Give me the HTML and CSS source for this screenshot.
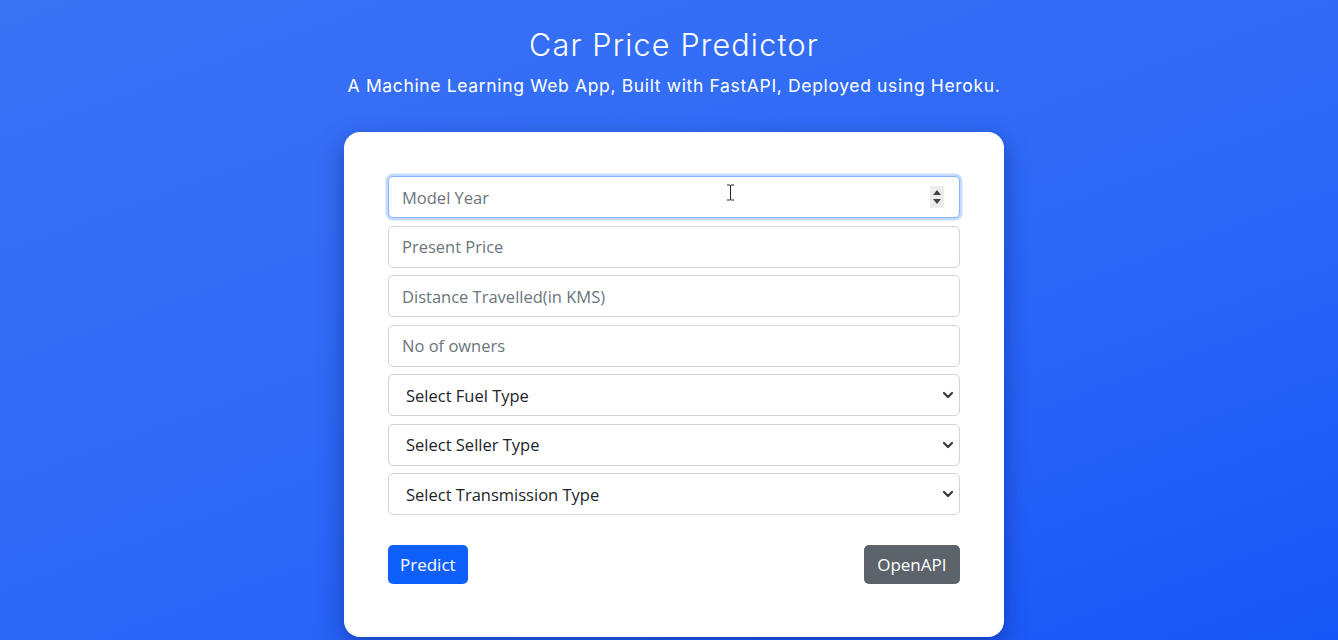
FILE: index.html
```html
<!DOCTYPE html>
<html lang="en">
<head>
<meta charset="utf-8">
<title>Car Price Predictor</title>
<link rel="stylesheet" href="styles.css">
</head>
<body>
<header class="hero">
  <h1 class="title">Car Price Predictor</h1>
  <p class="subtitle">A Machine Learning Web App, Built with FastAPI, Deployed using Heroku.</p>
</header>
<main class="card">
  <form class="form">
    <div class="field">
      <input class="control focused" type="text" placeholder="Model Year">
      <svg class="spinner" width="14" height="22" viewBox="0 0 14 22"><rect x="0" y="0" width="14" height="22" fill="#ececec"/><path d="M3 9 L7 4 L11 9 Z M3 13 L7 18 L11 13 Z" fill="#444"/></svg>
      <svg class="ibeam" width="9" height="17" viewBox="0 0 9 17"><path d="M1 1 H3.5 Q4.5 1 4.5 2 V15 Q4.5 16 3.5 16 H1 M8 1 H5.5 Q4.5 1 4.5 2 M8 16 H5.5 Q4.5 16 4.5 15" fill="none" stroke="#222" stroke-width="1"/></svg>
    </div>
    <input class="control" type="text" placeholder="Present Price">
    <input class="control" type="text" placeholder="Distance Travelled(in KMS)">
    <input class="control" type="text" placeholder="No of owners">
    <div class="field">
      <select class="control select"><option>Select Fuel Type</option></select>
      <svg class="chev" width="12" height="8" viewBox="0 0 12 8"><path d="M2 2 L6 6 L10 2" fill="none" stroke="#343a40" stroke-width="2.2" stroke-linecap="round" stroke-linejoin="round"/></svg>
    </div>
    <div class="field">
      <select class="control select"><option>Select Seller Type</option></select>
      <svg class="chev" width="12" height="8" viewBox="0 0 12 8"><path d="M2 2 L6 6 L10 2" fill="none" stroke="#343a40" stroke-width="2.2" stroke-linecap="round" stroke-linejoin="round"/></svg>
    </div>
    <div class="field">
      <select class="control select"><option>Select Transmission Type</option></select>
      <svg class="chev" width="12" height="8" viewBox="0 0 12 8"><path d="M2 2 L6 6 L10 2" fill="none" stroke="#343a40" stroke-width="2.2" stroke-linecap="round" stroke-linejoin="round"/></svg>
    </div>
    <div class="actions">
      <button type="button" class="btn btn-primary">Predict</button>
      <button type="button" class="btn btn-secondary">OpenAPI</button>
    </div>
  </form>
</main>
</body>
</html>
```

FILE: styles.css
```css
* { box-sizing: border-box; }
html, body { height: 100%; }
body {
  margin: 0;
  padding-left: 10px;
  min-height: 640px;
  overflow: hidden;
  background: linear-gradient(160deg, #3b73f5 0%, #2f6af6 45%, #2561f8 75%, #1656f6 100%);
  font-family: "Open Sans", "Noto Sans", sans-serif;
}
.hero {
  text-align: center;
  color: #fff;
  padding-top: 27px;
}
.title {
  margin: 0;
  font-family: Inter, "DejaVu Sans", sans-serif;
  font-weight: 300;
  font-size: 30.5px;
  line-height: 36px;
  letter-spacing: 1.2px;
}
.subtitle {
  margin: 12px 0 0;
  font-family: Inter, "DejaVu Sans", sans-serif;
  font-weight: 400;
  font-size: 17.5px;
  line-height: 22px;
  letter-spacing: 0.65px;
}
.card {
  width: 660px;
  margin: 35px auto 0;
  background: #fff;
  border-radius: 16px;
  padding: 44px 44px 53px;
  box-shadow: 0 8px 24px rgba(5, 25, 110, 0.45);
}
.form {
  display: flex;
  flex-direction: column;
  gap: 7.5px;
}
.field { position: relative; }
.control {
  display: block;
  width: 100%;
  height: 42px;
  margin: 0;
  border: 1px solid #ced4da;
  border-radius: 5px;
  background: #fff;
  padding: 0 13px;
  font-family: "Open Sans", "Noto Sans", sans-serif;
  font-size: 16.5px;
  color: #212529;
  outline: none;
}
.control::placeholder { color: #6c757d; }
.control.focused {
  border-color: #86b7fe;
  box-shadow: 0 0 0 2.5px rgba(13, 110, 253, 0.25);
}
.select {
  -webkit-appearance: none;
  appearance: none;
  padding: 0 17px;
  font-size: 16.5px;
  color: #212529;
}
.chev {
  position: absolute;
  right: 6px;
  top: 17px;
}
.spinner {
  position: absolute;
  right: 16px;
  top: 10px;
}
.ibeam {
  position: absolute;
  left: 338px;
  top: 8px;
}
.actions {
  display: flex;
  justify-content: space-between;
  margin-top: 22px;
}
.btn {
  height: 39px;
  border: none;
  border-radius: 5px;
  padding: 0 12px;
  font-family: "Open Sans", "Noto Sans", sans-serif;
  font-size: 17px;
  color: #fff;
}
.btn-primary { background: #0f5ffb; }
.btn-secondary { background: #5c636a; padding: 0 13.5px; }
```
